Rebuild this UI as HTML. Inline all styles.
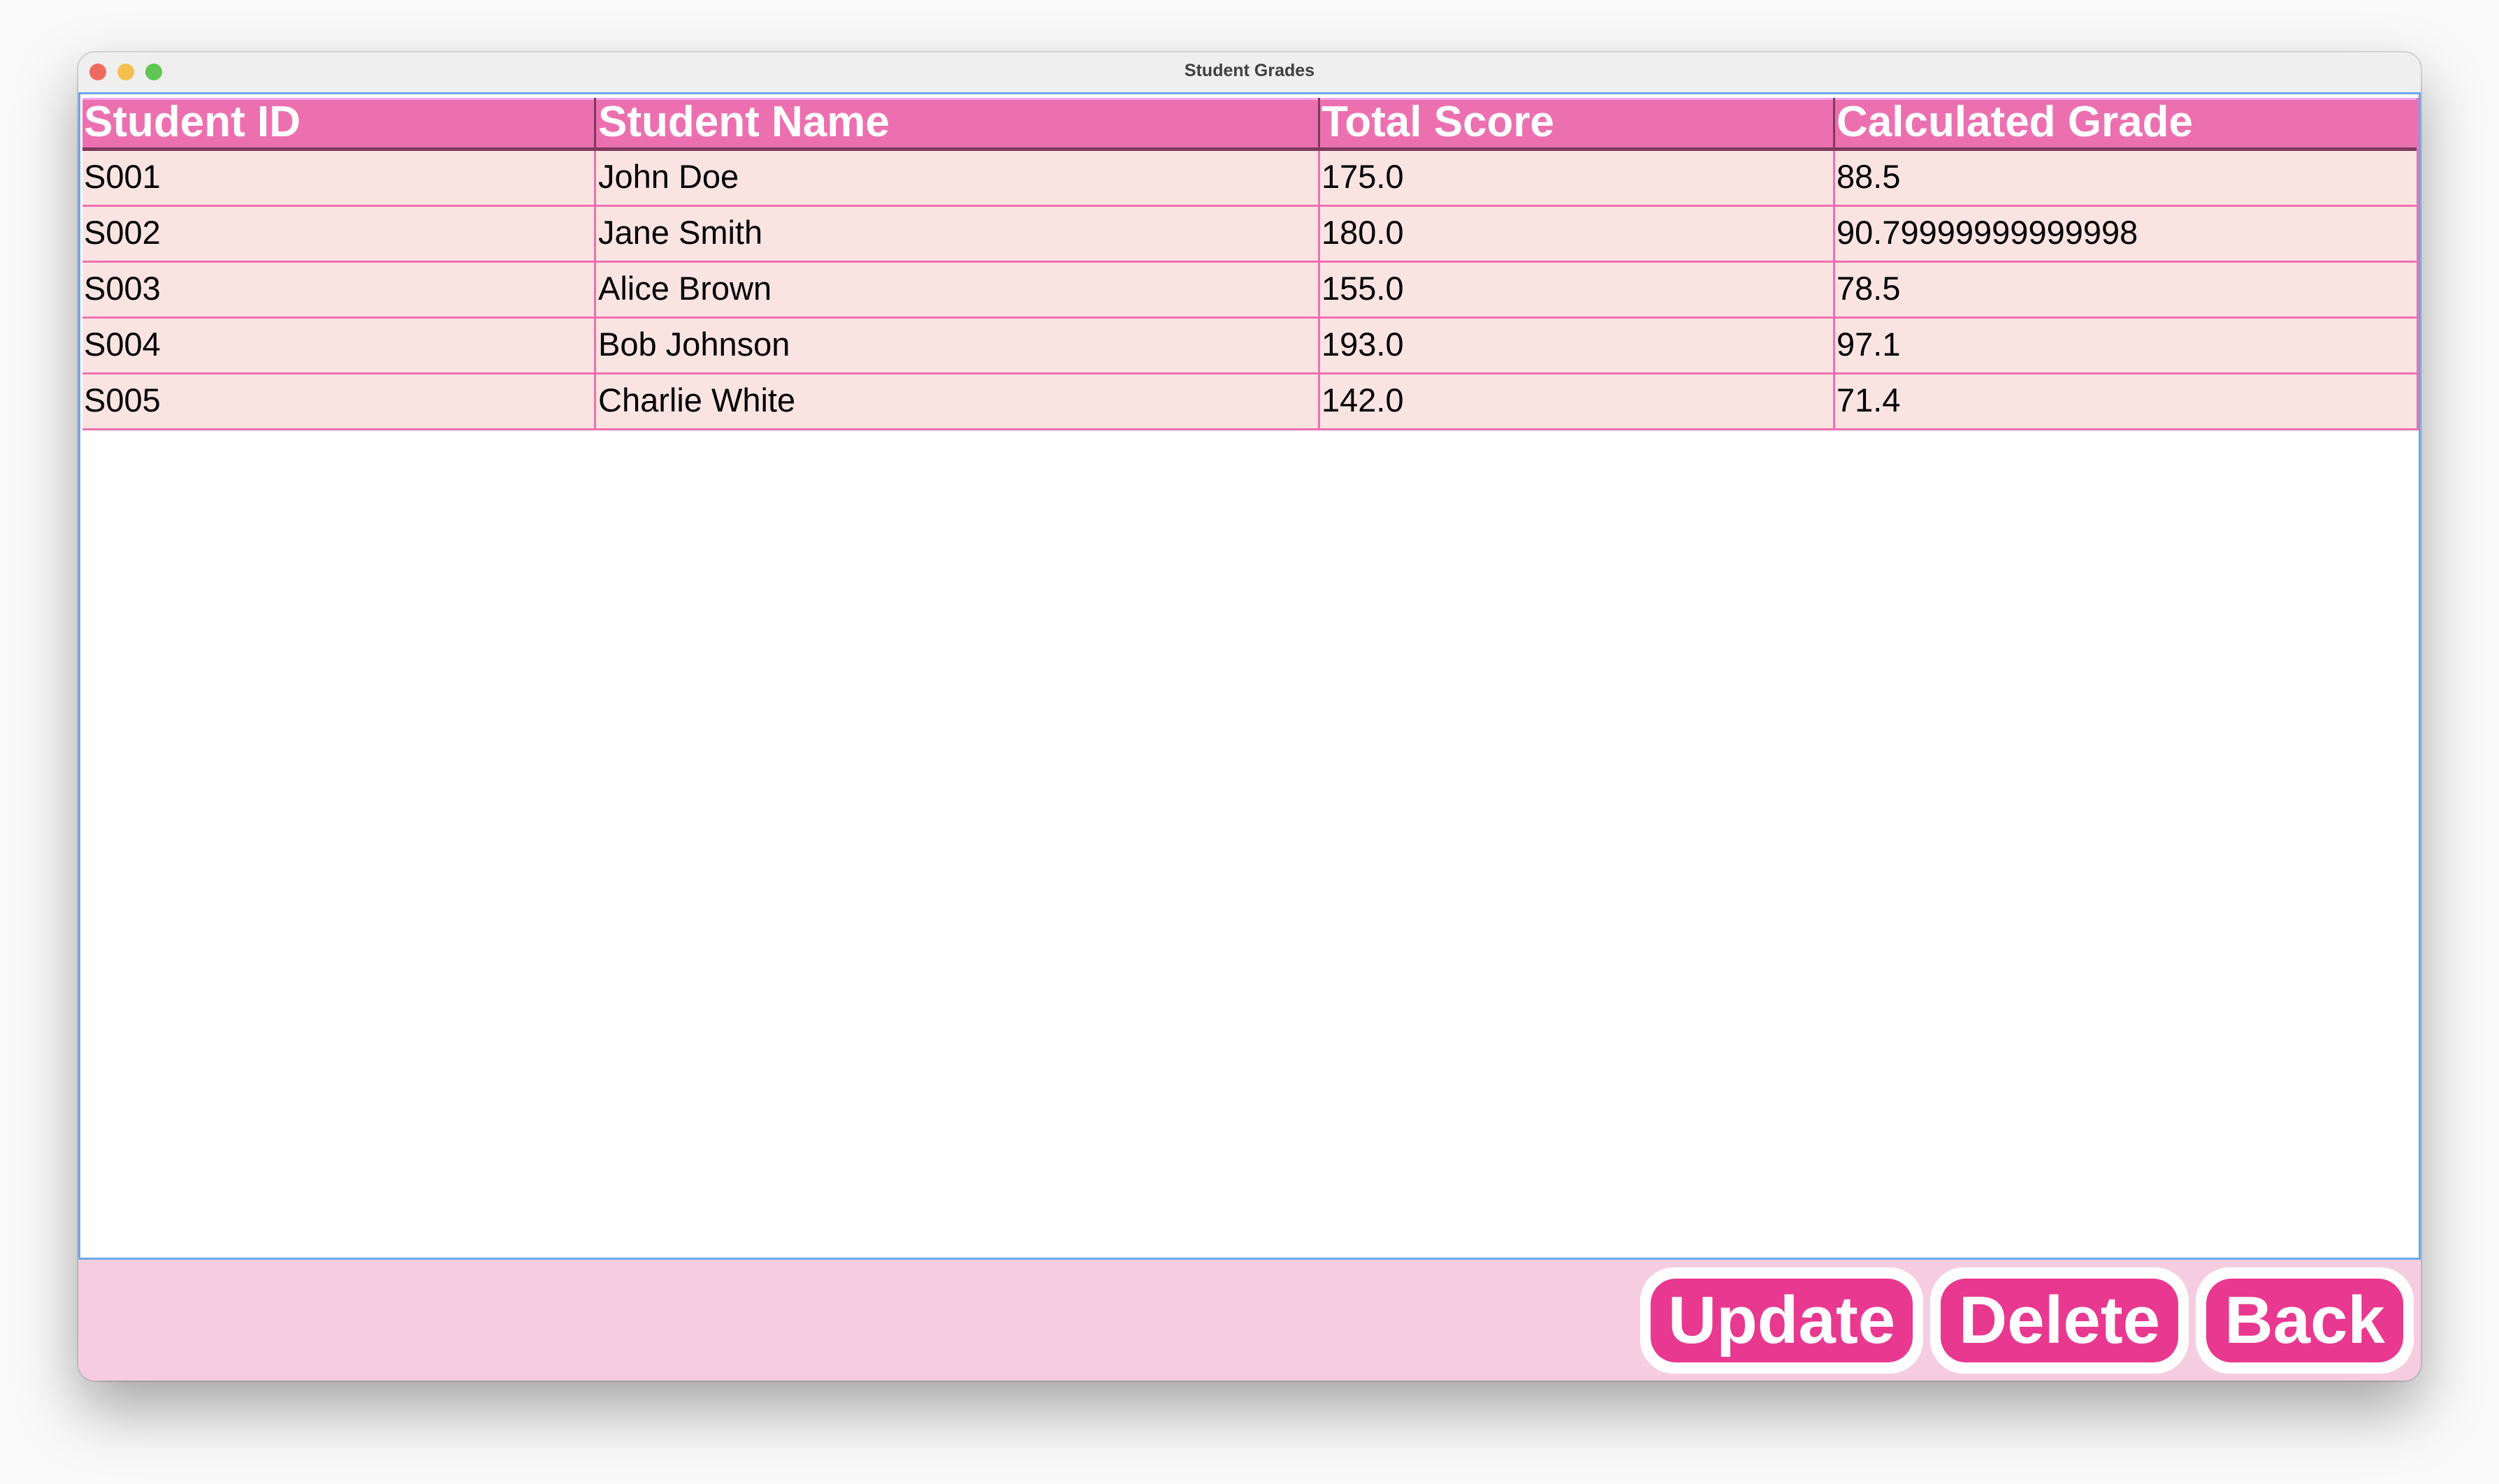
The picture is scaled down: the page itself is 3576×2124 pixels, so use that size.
<!DOCTYPE html>
<html><head><style>
*{margin:0;padding:0;box-sizing:border-box}
body{width:3576px;height:2124px;background:#fafafa;position:relative;overflow:hidden;font-family:"Liberation Sans",Arial,sans-serif}
.win{position:absolute;left:112px;top:75px;width:3352px;height:1901px;border-radius:24px;background:#efefef;box-shadow:0 40px 90px rgba(0,0,0,0.35),0 0 0 2px rgba(0,0,0,0.12);overflow:hidden}
.title{position:absolute;left:0;top:0;width:100%;height:57px;text-align:center;font-weight:bold;font-size:25px;color:#404040;line-height:52px}
.dot{position:absolute;top:16px;width:24px;height:24px;border-radius:50%}
.content{position:absolute;left:0;top:57px;width:3352px;height:1671px;background:#fff;border:3px solid #6aa7e6}
.footer{position:absolute;left:0;top:1728px;width:3352px;height:173px;background:#f6cde0}
.hdr{position:absolute;left:3px;top:5px;height:76px;background:#ec70b0;border-top:3px solid #f5a6e8;border-bottom:5px solid #7d3a5c}
.hdr span{position:absolute;top:-3px;color:#fff;font-weight:bold;font-size:62px;line-height:70px;padding-left:2px}
.row{position:absolute;left:3px;width:3343px;height:80px;background:#f9e4e1;border-bottom:3px solid #ee70b0}
.row span{position:absolute;top:-3px;font-size:47px;line-height:80px;color:#000;padding-left:2px}
.vl{position:absolute;top:5px;width:3px;background:#ee70b0}
.btn{position:absolute;top:11px;height:152px;background:#fff;border-radius:48px;padding:16px 15px}
.btn div{width:100%;height:100%;background:#e8388f;border-radius:36px;color:#fff;font-weight:bold;font-size:96px;text-align:center;line-height:120px}
</style></head><body>
<div class="win">
 <div class="title">Student Grades</div>
 <div class="dot" style="left:16px;background:#ee6a5e"></div>
 <div class="dot" style="left:56px;background:#f5bf4f"></div>
 <div class="dot" style="left:96px;background:#61c554"></div>
 <div class="content">
  <div class="hdr" style="width:3343px">
   <span style="left:0">Student ID</span>
   <span style="left:736px">Student Name</span>
   <span style="left:1771px">Total Score</span>
   <span style="left:2508px">Calculated Grade</span>
  </div>
  <div class="row" style="top:81px"><span style="left:0">S001</span><span style="left:736px">John Doe</span><span style="left:1771px">175.0</span><span style="left:2508px">88.5</span></div>
  <div class="row" style="top:161px"><span style="left:0">S002</span><span style="left:736px">Jane Smith</span><span style="left:1771px">180.0</span><span style="left:2508px">90.79999999999998</span></div>
  <div class="row" style="top:241px"><span style="left:0">S003</span><span style="left:736px">Alice Brown</span><span style="left:1771px">155.0</span><span style="left:2508px">78.5</span></div>
  <div class="row" style="top:321px"><span style="left:0">S004</span><span style="left:736px">Bob Johnson</span><span style="left:1771px">193.0</span><span style="left:2508px">97.1</span></div>
  <div class="row" style="top:401px"><span style="left:0">S005</span><span style="left:736px">Charlie White</span><span style="left:1771px">142.0</span><span style="left:2508px">71.4</span></div>
  <div class="vl" style="left:735px;background:#7d3a5c;height:76px"></div>
  <div class="vl" style="left:735px;top:81px;height:400px"></div>
  <div class="vl" style="left:1771px;background:#7d3a5c;height:76px"></div>
  <div class="vl" style="left:1771px;top:81px;height:400px"></div>
  <div class="vl" style="left:2508px;background:#7d3a5c;height:76px"></div>
  <div class="vl" style="left:2508px;top:81px;height:400px"></div>
  <div class="vl" style="left:3343px;top:5px;height:476px"></div>
 </div>
 <div class="footer">
  <div class="btn" style="left:2235px;width:405px"><div>Update</div></div>
  <div class="btn" style="left:2650px;width:370px"><div>Delete</div></div>
  <div class="btn" style="left:3030px;width:312px"><div>Back</div></div>
 </div>
</div>
</body></html>
